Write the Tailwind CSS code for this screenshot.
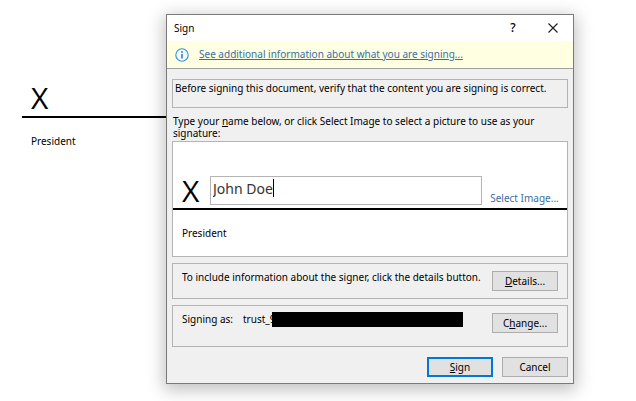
<!DOCTYPE html>
<html lang="en">
<head>
  <meta charset="UTF-8" />
  <meta name="viewport" content="width=device-width, initial-scale=1" />
  <title>Sign</title>
  <script src="https://cdn.jsdelivr.net/npm/@tailwindcss/browser@4"></script>
</head>
<body class="relative min-h-screen overflow-hidden bg-white font-['Noto_Sans',sans-serif] text-[10px] text-black">

<!-- signature line in the document -->
<main class="ml-[22px] w-64 pt-20">
  <p class="pl-[9px] font-['Open_Sans',sans-serif] text-[30px] leading-9">X</p>
  <div class="border-t-2 border-black pt-[15px]">
    <p class="pl-[9px] leading-4">President</p>
  </div>
</main>

<!-- dialog -->
<div role="dialog" aria-labelledby="dialogTitle" class="absolute top-3.5 left-[166px] w-[408px] border border-[#7a7a7a] bg-[#f0f0f0] shadow-[0_4px_16px_2px_rgba(0,0,0,0.25)]">
  <header class="flex h-[26px] items-center bg-white pl-[7px]">
    <h1 id="dialogTitle" class="flex-1">Sign</h1>
    <button class="h-full w-10 text-[12px] font-medium" aria-label="Help">?</button>
    <button class="flex h-full w-10 items-center justify-center" aria-label="Close">
      <svg class="size-2.5" viewBox="0 0 10 10" fill="none" stroke="#1a1a1a" stroke-width="1.1"><path d="M.5.5l9 9M9.5.5l-9 9" /></svg>
    </button>
  </header>

  <div class="flex h-7 items-center gap-2.5 border-b border-[#a0a0a0] bg-[#ffffe1] pl-2">
    <svg class="size-3.5" viewBox="0 0 14 14" fill="none">
      <circle cx="7" cy="7" r="6.2" fill="#f4faff" stroke="#3a8fd0" stroke-width="1.1" />
      <path d="M7 6v4.5" stroke="#1f7ac4" stroke-width="1.5" />
      <circle cx="7" cy="4" r=".9" fill="#1f7ac4" />
    </svg>
    <a href="#" class="text-[#3a6ea5] underline">See additional information about what you are signing...</a>
  </div>

  <form class="px-[5px] pt-2.5 pb-1.5">
    <p class="h-[29px] border border-[#b4b4b4] px-0.5 leading-4">Before signing this document, verify that the content you are signing is correct.</p>

    <label for="signerName" class="mt-[7px] mb-0.5 block pr-4 pl-px leading-3">Type your <u>n</u>ame below, or click Select Image to select a picture to use as your signature:</label>

    <div class="border border-[#b4b4b4] bg-white pt-[34px] pb-[15px]">
      <div class="flex items-end border-b-2 border-black pb-[3px] pl-[9px]">
        <span class="w-7 font-['Open_Sans',sans-serif] text-[30px] leading-7">X</span>
        <div class="relative flex-1">
          <input id="signerName" type="text" value="John Doe" class="h-[29px] w-full border border-[#b4b4b4] px-0.5 pb-1 text-[14px] text-[#333] caret-transparent outline-none">
          <!-- caret -->
          <span class="absolute top-[3px] left-[63px] h-[18px] w-px bg-black"></span>
        </div>
        <button type="button" class="w-[85px] pb-px leading-3 text-[#3a6ea5]">Select Image...</button>
      </div>
      <p class="mt-[15px] pl-[9px] leading-4">President</p>
    </div>

    <div class="mt-1.5 flex h-9 border border-[#b4b4b4] px-[9px]">
      <p class="flex-1 pt-[5px] leading-4">To include information about the signer, click the details button.</p>
      <button type="button" class="mt-[7px] h-5 w-[66px] border border-[#adadad] bg-[#e1e1e1]"><u>D</u>etails...</button>
    </div>

    <div class="mt-1.5 flex h-[42px] border border-[#b4b4b4] px-[9px]">
      <p class="pt-[5px] leading-4">Signing as:</p>
      <div class="relative ml-2.5 flex-1 pt-[5px] leading-4">
        trust_9
        <span class="absolute top-1.5 right-[29px] left-[29px] h-[15px] bg-black"></span>
      </div>
      <button type="button" class="mt-[7px] h-5 w-[66px] border border-[#adadad] bg-[#e1e1e1]">C<u>h</u>ange...</button>
    </div>

    <div class="mt-2.5 flex justify-end gap-[9px]">
      <button class="h-5 w-[66px] border-2 border-[#0078d7] bg-[#e1e1e1]"><u>S</u>ign</button>
      <button type="button" class="h-5 w-[66px] border border-[#adadad] bg-[#e1e1e1]">Cancel</button>
    </div>
  </form>
</div>

</body>
</html>
